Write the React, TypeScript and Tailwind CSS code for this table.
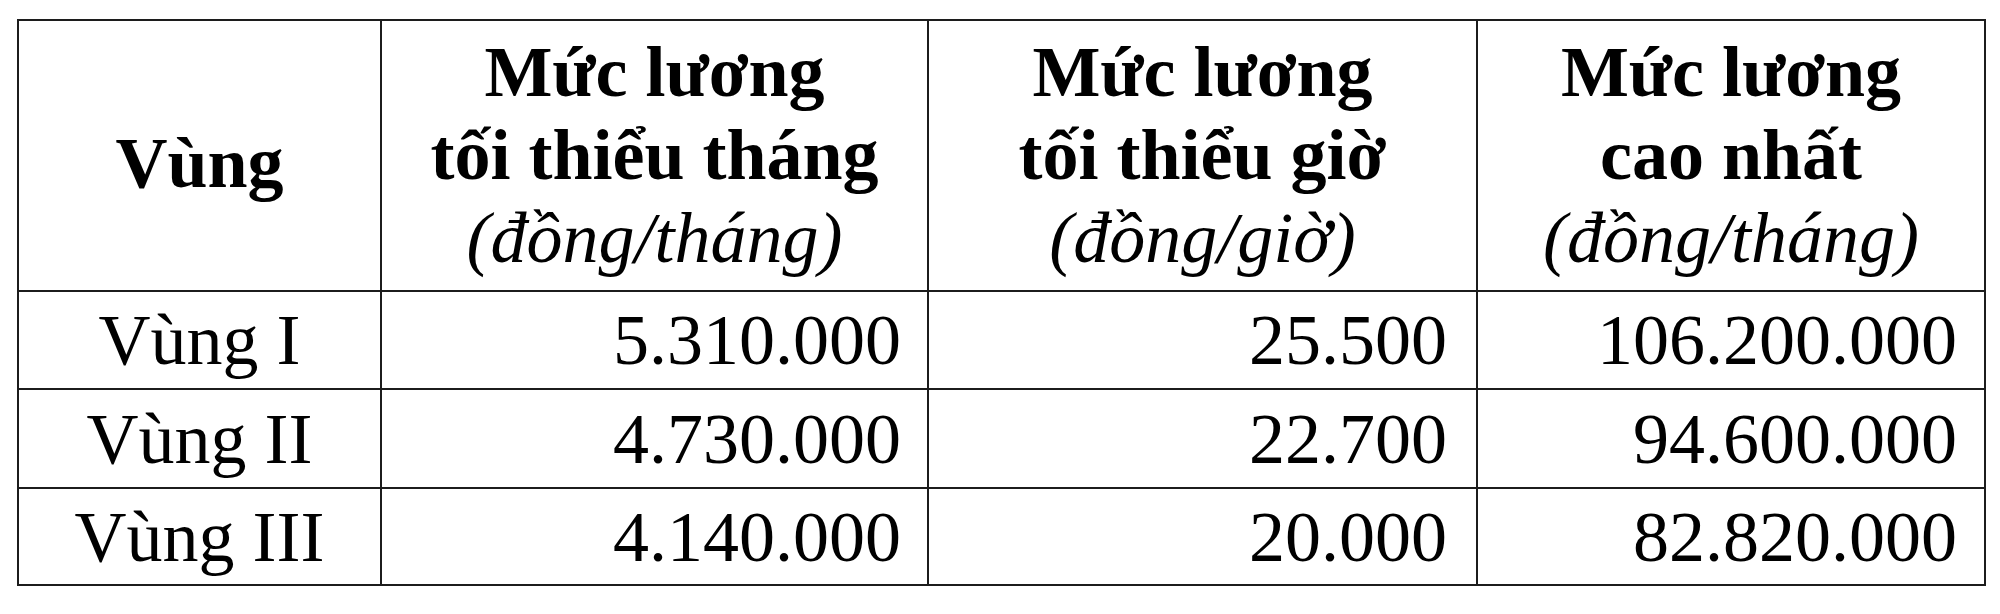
import React from "react";

type Row = {
  name: string;
  month: string;
  hour: string;
  max: string;
};

const rows: Row[] = [
  { name: "Vùng I", month: "5.310.000", hour: "25.500", max: "106.200.000" },
  { name: "Vùng II", month: "4.730.000", hour: "22.700", max: "94.600.000" },
  { name: "Vùng III", month: "4.140.000", hour: "20.000", max: "82.820.000" },
];

const rowHeights = ["h-[98px]", "h-[99px]", "h-[97px]"];

function HeadCell({ lines, unit }: { lines: string[]; unit?: string }) {
  return (
    <div className="flex flex-col items-center justify-center border-r-2 border-b-2 border-[#1c1c1c] text-center leading-[83px]">
      {lines.map((l) => (
        <div key={l} className="font-bold whitespace-nowrap">
          {l}
        </div>
      ))}
      {unit && <div className="italic whitespace-nowrap">{unit}</div>}
    </div>
  );
}

export default function App() {
  return (
    <div className="min-h-screen w-full bg-white pl-[17px] pt-[19px] text-black">
      <div
        className="grid w-fit grid-cols-[363px_547px_549px_508px] border-t-2 border-l-2 border-[#1c1c1c] text-[72px]"
        style={{ fontFamily: '"Liberation Serif", "Times New Roman", serif' }}
      >
        {/* header */}
        <div className="flex h-[271px] items-center justify-center border-r-2 border-b-2 border-[#1c1c1c] pt-[14px] font-bold">
          Vùng
        </div>
        <HeadCell lines={["Mức lương", "tối thiểu tháng"]} unit="(đồng/tháng)" />
        <HeadCell lines={["Mức lương", "tối thiểu giờ"]} unit="(đồng/giờ)" />
        <HeadCell lines={["Mức lương", "cao nhất"]} unit="(đồng/tháng)" />

        {/* body */}
        {rows.map((r, i) => (
          <React.Fragment key={r.name}>
            <div
              className={`${rowHeights[i]} flex items-center justify-center border-r-2 border-b-2 border-[#1c1c1c] leading-none`}
            >
              {r.name}
            </div>
            <div
              className={`${rowHeights[i]} flex items-center justify-end border-r-2 border-b-2 border-[#1c1c1c] pr-[26px] leading-none`}
            >
              {r.month}
            </div>
            <div
              className={`${rowHeights[i]} flex items-center justify-end border-r-2 border-b-2 border-[#1c1c1c] pr-[29px] leading-none`}
            >
              {r.hour}
            </div>
            <div
              className={`${rowHeights[i]} flex items-center justify-end border-r-2 border-b-2 border-[#1c1c1c] pr-[27px] leading-none`}
            >
              {r.max}
            </div>
          </React.Fragment>
        ))}
      </div>
    </div>
  );
}
